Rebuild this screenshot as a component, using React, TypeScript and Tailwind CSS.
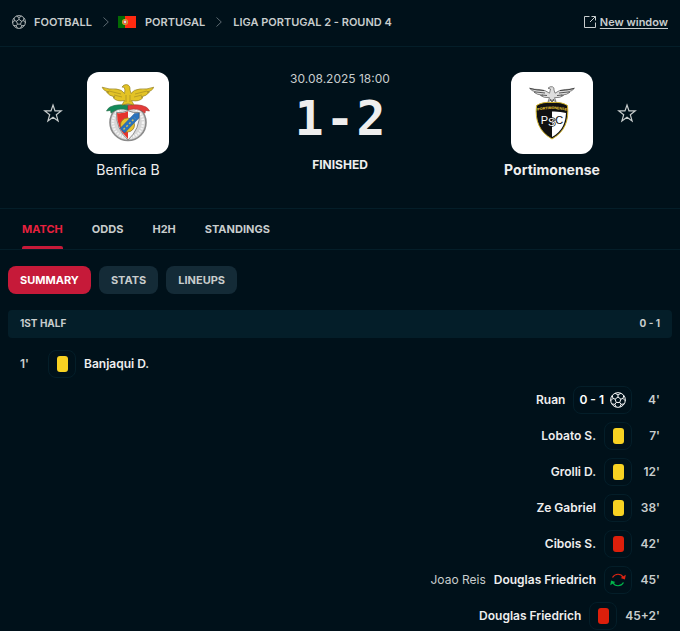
import { ReactNode } from 'react';

type EventKind = 'yellow' | 'red' | 'goal' | 'sub';

interface MatchEvent {
  minute: string;
  side: 'home' | 'away';
  kind: EventKind;
  player: string;
  assist?: string;
  score?: string;
}

const events: MatchEvent[] = [
  { minute: "1'", side: 'home', kind: 'yellow', player: 'Banjaqui D.' },
  { minute: "4'", side: 'away', kind: 'goal', player: 'Ruan', score: '0 - 1' },
  { minute: "7'", side: 'away', kind: 'yellow', player: 'Lobato S.' },
  { minute: "12'", side: 'away', kind: 'yellow', player: 'Grolli D.' },
  { minute: "38'", side: 'away', kind: 'yellow', player: 'Ze Gabriel' },
  { minute: "42'", side: 'away', kind: 'red', player: 'Cibois S.' },
  { minute: "45'", side: 'away', kind: 'sub', player: 'Douglas Friedrich', assist: 'Joao Reis' },
  { minute: "45+2'", side: 'away', kind: 'red', player: 'Douglas Friedrich' },
];

const tabs = ['Match', 'Odds', 'H2H', 'Standings'];
const filters = ['Summary', 'Stats', 'Lineups'];

function BallIcon({ className }: { className: string }) {
  return (
    <svg viewBox="0 0 20 20" className={className} fill="none" stroke="currentColor" strokeWidth="1.2" aria-hidden="true">
      <circle cx="10" cy="10" r="9.2" />
      <path d="M10 6.3l3.6 2.6-1.4 4.2H7.8L6.4 8.9z" />
      <path d="M10 6.3V3.6M13.6 8.9l2.7-.9M12.2 13.1l1.7 2.3M7.8 13.1l-1.7 2.3M6.4 8.9L3.7 8" />
      <path d="M6.4 1.7L10 3.6l3.6-1.9M17.2 4.3L16.3 8l2.8 3M17.6 15l-3.7.4-1.6 3.4M7.7 18.8l-1.6-3.4-3.7-.4M.9 11l2.8-3-.9-3.7" />
    </svg>
  );
}

function ChevronIcon() {
  return (
    <svg viewBox="0 0 6 10" className="h-2.5 w-1.5 text-[#5c6a71]" fill="none" stroke="currentColor" aria-hidden="true">
      <path d="M.5.5L5.3 5 .5 9.5" />
    </svg>
  );
}

function StarButton({ team }: { team: string }) {
  return (
    <button type="button" aria-label={`Add ${team} to favourites`} className="flex h-[82px] w-5 items-center text-[#c8cdcd]">
      <svg viewBox="0 0 20 20" className="h-5 w-5" fill="none" stroke="currentColor" strokeWidth="1.2">
        <path d="M10 2l2 5.900h6.200l-4.900 3.800 1.800 6.200-5.100-3.600-5.100 3.600 1.800-6.200-4.900-3.800H8z" />
      </svg>
    </button>
  );
}

function PortugalFlag() {
  return (
    <svg viewBox="0 0 18 12" className="h-3 w-[18px]" aria-label="Portugal flag">
      <path fill="#046a04" d="M0 0h7v12H0z" />
      <path fill="#ff2a10" d="M7 0h11v12H7z" />
      <circle cx="7" cy="6" r="2.5" fill="#e8301c" stroke="#c9a832" strokeWidth="1.1" />
      <circle cx="7" cy="6" r="1.4" fill="#dcd9e8" />
    </svg>
  );
}

function BenficaCrest() {
  return (
    <svg viewBox="0 0 60 60" className="h-[60px] w-[60px]" role="img" aria-label="Benfica B crest">
      <circle cx="30" cy="39.500" r="18" fill="#d6d6d6" stroke="#8b8b8b" strokeWidth="1.6" />
      <circle cx="30" cy="39.500" r="15" fill="none" stroke="#f5f5f5" strokeWidth="2.500" strokeDasharray="1.6 1.2" />
      <path fill="#f8f8f8" stroke="#777" strokeWidth=".8" d="M18.500 29.500q6 1 11.500-1.800 5.500 2.800 11.500 1.800.6 16.500-11.500 27.500-12.100-11-11.500-27.500z" />
      <path fill="#e5332b" d="M19 30q6 .8 11-1.800V56q-11.500-10.500-11-26z" />
      <circle cx="29.500" cy="42" r="7" fill="#e8c32d" stroke="#937b29" strokeWidth=".8" />
      <path fill="#2972bd" stroke="#26588b" strokeWidth=".5" d="M22 45.500L36.500 30.500l4.500-.5v5L26.500 50z" />
      <path stroke="#d5bd50" strokeWidth="1.500" strokeDasharray="2 2" d="M25.500 46.500L37 35" />
      <path fill="#138a59" stroke="#286a46" strokeWidth=".6" d="M30 22.500q-11-2-18 1.500-2 1-3.500 4l4-.6.500 2.800q7-6.200 17-3.200z" />
      <path fill="#e33c39" stroke="#a7302e" strokeWidth=".6" d="M30 22.500q11-2 18 1.500 2 1 3.500 4l-4-.6-.5 2.800q-7-6.200-17-3.200z" />
      <path
        fill="#e3c325"
        stroke="#94801f"
        strokeWidth=".7"
        strokeLinejoin="round"
        d="M24 22l2.500-4.500q-8 1.600-11.500-3l2-.5q-6-1-8.500-5H11Q5.500 8 4.200 4.200q7 2.500 14 1.800 6 .5 8.300 4.500 1-4-.3-6.200l-2.200-.2q1.500-2.800 4.500-2.500 4 .6 3.500 5.400l1 3.500q2.500-4 8.800-4.500 7.200.7 13.900-1.800Q54.400 8 49 9h2.500q-3 4-8.500 5l2 .5q-3.500 4.600-11.500 3L36 22l-6-1.200z"
      />
      <path stroke="#a88e22" strokeWidth=".7" fill="none" d="M11 8l12 3M16 12l8 2M49 8l-12 3M44 12l-8 2M28 12v7M32 12v7" />
    </svg>
  );
}

function PortimonenseCrest() {
  return (
    <svg viewBox="0 0 60 60" className="h-[60px] w-[60px]" role="img" aria-label="Portimonense crest">
      <path fill="#111" stroke="#d4b52e" strokeWidth="1" d="M30 19.500q9-1 15.500 3 1.300 12-2.500 20-3.500 8-13 13.500Q20.500 50.500 17 42.500q-3.800-8-2.500-20 6.500-4 15.500-3z" />
      <path fill="#fff" d="M30 28.500q8-.3 14 1.500-.5 8-3 13-3.500 7-11 11z" />
      <path id="crest-arc" fill="none" d="M15 28q15-4 30 0" />
      <text fontSize="3.600" fontWeight="700" fill="#f4d536" fontFamily="Liberation Sans, sans-serif" textAnchor="middle">
        <textPath href="#crest-arc" startOffset="50%">PORTIMONENSE</textPath>
      </text>
      <text x="30" y="41" fontSize="11" textAnchor="middle" fontFamily="Liberation Sans, sans-serif">
        <tspan fill="#fff">P</tspan>
        <tspan dy="2" fill="#fff" stroke="#111" strokeWidth="1.500" paintOrder="stroke">S</tspan>
        <tspan dy="-2" fill="#111">C</tspan>
      </text>
      <path
        fill="#dedede"
        stroke="#555"
        strokeWidth=".7"
        strokeLinejoin="round"
        d="M26 18.500l1.500-3.800q-6 .3-9-2.200l2-.3q-6-.5-8.500-3l2-.2Q9.500 8 7.500 5.200q5 1.500 9.500 1.300 7 .5 10.500 3.700l1-4.200-2.500-.8q2-2.200 4.500-1.400 2 .7 1.500 3.200l1 3.200q3.500-3.200 10.500-3.700 4.500.2 9-1.300-2 2.800-6.500 3.800l2 .2q-2.500 2.500-8.500 3l2 .3q-3 2.500-9 2.200l1.500 3.800-4-1.500z"
      />
      <path stroke="#333" strokeWidth=".8" d="M8 5.500q7 2 14 2M52 5.500q-7 2-14 2M14 9l9 1M46 9l-9 1M20 12l5 .5M40 12l-5 .5M28 16l2 3 2-3" fill="none" />
    </svg>
  );
}

function SubstitutionIcon() {
  return (
    <svg viewBox="0 0 16 14" className="h-3.5 w-4" fill="none" strokeWidth="1.200" aria-label="Substitution">
      <path stroke="#dc2413" d="M2.500 4.500C5 .2 11 .2 13 4.200" />
      <path fill="#dc2413" d="M15.800 1.800l-.9 4.700-4.300-1.600z" />
      <path stroke="#00b64b" d="M13.500 9.500c-2.500 4.300-8.500 4.300-10.500.3" />
      <path fill="#00b64b" d="M.2 12.200l.9-4.700 4.300 1.600z" />
    </svg>
  );
}

function EventIcon({ kind, score }: { kind: EventKind; score?: string }) {
  return (
    <div className="flex h-7 min-w-7 items-center justify-center gap-1.5 rounded-lg border border-[#041e29] px-[5px] text-white">
      {score && <span>{score}</span>}
      {kind === 'yellow' && <span role="img" aria-label="Yellow card" className="h-4 w-[11px] rounded-[3px] bg-[#f8d222]" />}
      {kind === 'red' && <span role="img" aria-label="Red card" className="h-4 w-[11px] rounded-[3px] bg-[#dc1f0b]" />}
      {kind === 'goal' && <BallIcon className="h-4 w-4" />}
      {kind === 'sub' && <SubstitutionIcon />}
    </div>
  );
}

function EventRow({ event }: { event: MatchEvent }) {
  const away = event.side === 'away';
  return (
    <li className={`flex h-9 items-center gap-2 px-3 text-xs font-semibold ${away ? 'flex-row-reverse' : ''}`}>
      <span className={`min-w-5 text-[#c8cdcd] ${away ? 'text-right' : ''}`}>{event.minute}</span>
      <EventIcon kind={event.kind} score={event.score} />
      <span className="text-[#eee]">{event.player}</span>
      {event.assist && <span className="font-normal text-[#c8cdcd]">{event.assist}</span>}
    </li>
  );
}

function Team({ name, winner, children }: { name: string; winner?: boolean; children: ReactNode }) {
  return (
    <div className="flex w-[110px] flex-col items-center gap-1.5">
      <div className="flex h-[82px] w-[82px] items-center justify-center rounded-xl bg-white">{children}</div>
      <a href="#team" className={`text-sm text-[#eee] ${winner ? 'font-bold' : ''}`}>{name}</a>
    </div>
  );
}

export default function App() {
  return (
    <div className="min-h-screen bg-[#00111a] font-['Inter',sans-serif] text-[#c8cdcd]">
      <header className="flex h-[47px] items-center justify-between border-b border-[#041e29] px-3 pb-0.5 text-[11px] font-semibold">
        <nav aria-label="Breadcrumb" className="flex items-center">
          <BallIcon className="mr-2 h-3.5 w-3.5" />
          <a href="#football" className="mr-[11px]">FOOTBALL</a>
          <ChevronIcon />
          <span className="mx-[9px]"><PortugalFlag /></span>
          <a href="#portugal" className="mr-[11px]">PORTUGAL</a>
          <ChevronIcon />
          <a href="#league" className="ml-[11px]">LIGA PORTUGAL 2 - ROUND 4</a>
        </nav>
        <a href="#window" className="flex items-center gap-1">
          <svg viewBox="0 0 12 12" className="h-3 w-3" fill="none" stroke="currentColor" aria-hidden="true">
            <path d="M5.500.5h-5v11h11v-5M7.500.5h4v4M11.500.5L6 6" />
          </svg>
          <span className="underline underline-offset-2">New window</span>
        </a>
      </header>

      <section className="flex h-[161px] pt-[25px]">
        <div className="flex flex-1 justify-center gap-2.5">
          <StarButton team="Benfica B" />
          <Team name="Benfica B"><BenficaCrest /></Team>
          <span className="w-5" />
        </div>
        <div className="flex w-[168px] flex-col items-center">
          <time className="text-xs leading-[14px]">30.08.2025 18:00</time>
          <div className="flex gap-0.5 font-['DejaVu_Sans_Mono',monospace] text-5xl leading-[64px] font-bold text-[#eee]">
            <span>1</span>
            <span>-</span>
            <span>2</span>
          </div>
          <span className="mt-2 text-xs leading-[14px] font-bold text-[#eee]">FINISHED</span>
        </div>
        <div className="flex flex-1 justify-center gap-2.5">
          <span className="w-5" />
          <Team name="Portimonense" winner><PortimonenseCrest /></Team>
          <StarButton team="Portimonense" />
        </div>
      </section>

      <nav className="flex h-[42px] gap-[29px] border-y border-[#041e29] px-[22px] text-[11px] font-bold">
        {tabs.map((tab, i) => (
          <a key={tab} href={`#${tab.toLowerCase()}`} className="flex flex-col uppercase">
            <span className={`flex flex-1 items-center pt-[3px] ${i === 0 ? 'text-[#e8213f]' : ''}`}>{tab}</span>
            <span className={`h-[3px] rounded-t-xs ${i === 0 ? 'bg-[#c61a39]' : ''}`} />
          </a>
        ))}
      </nav>

      <main className="px-2 pt-4">
        <div className="flex gap-2">
          {filters.map((filter, i) => (
            <button
              key={filter}
              type="button"
              className={`h-7 rounded-lg px-3 text-[11px] font-bold uppercase ${i === 0 ? 'bg-[#c61a39] text-white' : 'bg-[#142b37]'}`}
            >
              {filter}
            </button>
          ))}
        </div>

        <h2 className="mt-4 mb-2 flex h-7 items-center justify-between rounded-sm bg-[#041e29] px-3 pb-0.5 text-[10px] font-bold">
          <span>1ST HALF</span>
          <span>0 - 1</span>
        </h2>
        <ul>
          {events.map((event) => (
            <EventRow key={event.minute} event={event} />
          ))}
        </ul>
      </main>
    </div>
  );
}
